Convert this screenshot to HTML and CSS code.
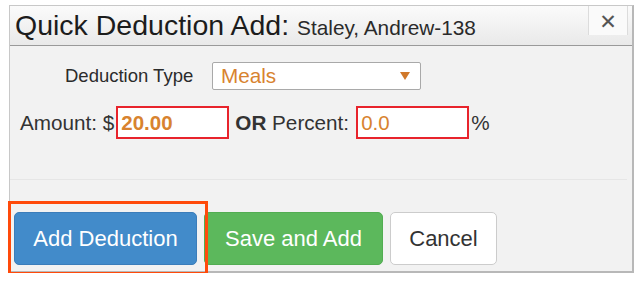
FILE: index.html
```html
<!DOCTYPE html>
<html lang="en">
<head>
    <meta charset="UTF-8">
    <meta name="viewport" content="width=device-width, initial-scale=1.0">
    <title>Quick Deduction Add</title>
    <link rel="stylesheet" href="styles.css">
</head>
<body>

    <div class="dialog">
        <div class="dialog-header">
            <span class="title">Quick Deduction Add:</span>
            <span class="employee">Staley, Andrew-138</span>
            <button class="close-button">&#x2715;</button>
        </div>

        <div class="dialog-body">
            <div class="type-row">
                <label class="type-label">Deduction Type</label>
                <div class="select-box">
                    <span>Meals</span>
                    <span class="caret"></span>
                </div>
            </div>
            <div class="amount-row">
                <span>Amount: $</span>
                <input class="field field-bold" type="text" value="20.00">
                <span class="or-text"><b>OR</b> Percent:</span>
                <input class="field" type="text" value="0.0">
                <span class="percent">%</span>
            </div>
        </div>

        <div class="dialog-footer">
            <div class="highlight">
                <button class="btn btn-primary">Add Deduction</button>
            </div>
            <button class="btn btn-success">Save and Add</button>
            <button class="btn btn-default">Cancel</button>
        </div>
    </div>

</body>
</html>
```

FILE: styles.css
```css
body {
    font-family: "Liberation Sans", Arial, sans-serif;
    background-color: white;
    margin: 0;
    padding: 5px 0 0 9px;
    color: #333;
}
.dialog {
    width: 622px;
    border: 1px solid #c8c8c8;
    border-right: 2px solid #b8b8b8;
    border-bottom: 2px solid #b8b8b8;
    background: #f2f2f2;
}
.dialog-header {
    display: flex;
    align-items: baseline;
    height: 39px;
    padding-left: 5px;
    background: linear-gradient(#fbfbfb, #e9e9e9);
    border-bottom: 1px solid #9a9a9a;
    position: relative;
}
.title {
    font-size: 28.5px;
    color: #1c1c1c;
    line-height: 39px;
}
.employee {
    font-size: 20.8px;
    color: #2a2a2a;
    margin-left: 8px;
}
.close-button {
    position: absolute;
    top: 0;
    right: 4px;
    width: 40px;
    height: 29px;
    border: none;
    border-left: 1px solid #dcdcdc;
    border-right: 1px solid #dcdcdc;
    background: #fafafa;
    color: #555;
    font-size: 21px;
    font-weight: bold;
    padding: 2px 0 0;
    font-family: "DejaVu Sans", sans-serif;
}
.dialog-body {
    height: 133px;
    margin-right: 5px;
    border-bottom: 1px solid #e6e6e6;
    font-size: 20.7px;
}
.type-row {
    display: flex;
    align-items: center;
    padding: 16px 0 0 55px;
}
.type-label {
    width: 147px;
    font-size: 18.5px;
    color: #2b2b2b;
}
.select-box {
    display: flex;
    justify-content: space-between;
    align-items: center;
    width: 189px;
    height: 26px;
    padding: 0 10px 0 8px;
    background: white;
    border: 1px solid #a9a9a9;
    border-radius: 2px;
    color: #d8832f;
}
.caret {
    width: 0;
    height: 0;
    border-left: 5px solid transparent;
    border-right: 5px solid transparent;
    border-top: 8px solid #d0782a;
}
.amount-row {
    display: flex;
    align-items: center;
    padding: 16px 0 0 10px;
}
.field {
    width: 103px;
    height: 29px;
    padding: 0 3px;
    margin: 0 0 0 2px;
    border: 2px solid #e8242c;
    background: white;
    color: #d8832f;
    font-family: "Liberation Sans", Arial, sans-serif;
    font-size: 20.5px;
    outline: none;
}
.field-bold {
    font-weight: bold;
}
.or-text {
    margin: 0 5px 0 6px;
}
.percent {
    margin-left: 2px;
}
.dialog-footer {
    display: flex;
    gap: 7px;
    padding: 32px 0 6px 4px;
    position: relative;
}
.highlight {
    display: flex;
}
.highlight::after {
    content: "";
    position: absolute;
    left: -2px;
    top: 21px;
    width: 194px;
    height: 68px;
    border: 3px solid #ff4a0a;
}
.btn {
    height: 53px;
    font-family: "Liberation Sans", Arial, sans-serif;
    font-size: 22px;
    border-radius: 5px;
    border: 1px solid transparent;
    padding: 0;
}
.btn-primary {
    width: 183px;
    background: #428bca;
    border-color: #3b7dba;
    color: white;
}
.btn-success {
    width: 179px;
    background: #5cb85c;
    border-color: #52ad52;
    color: white;
}
.btn-default {
    width: 107px;
    background: white;
    border-color: #cccccc;
    color: #333;
}
```
